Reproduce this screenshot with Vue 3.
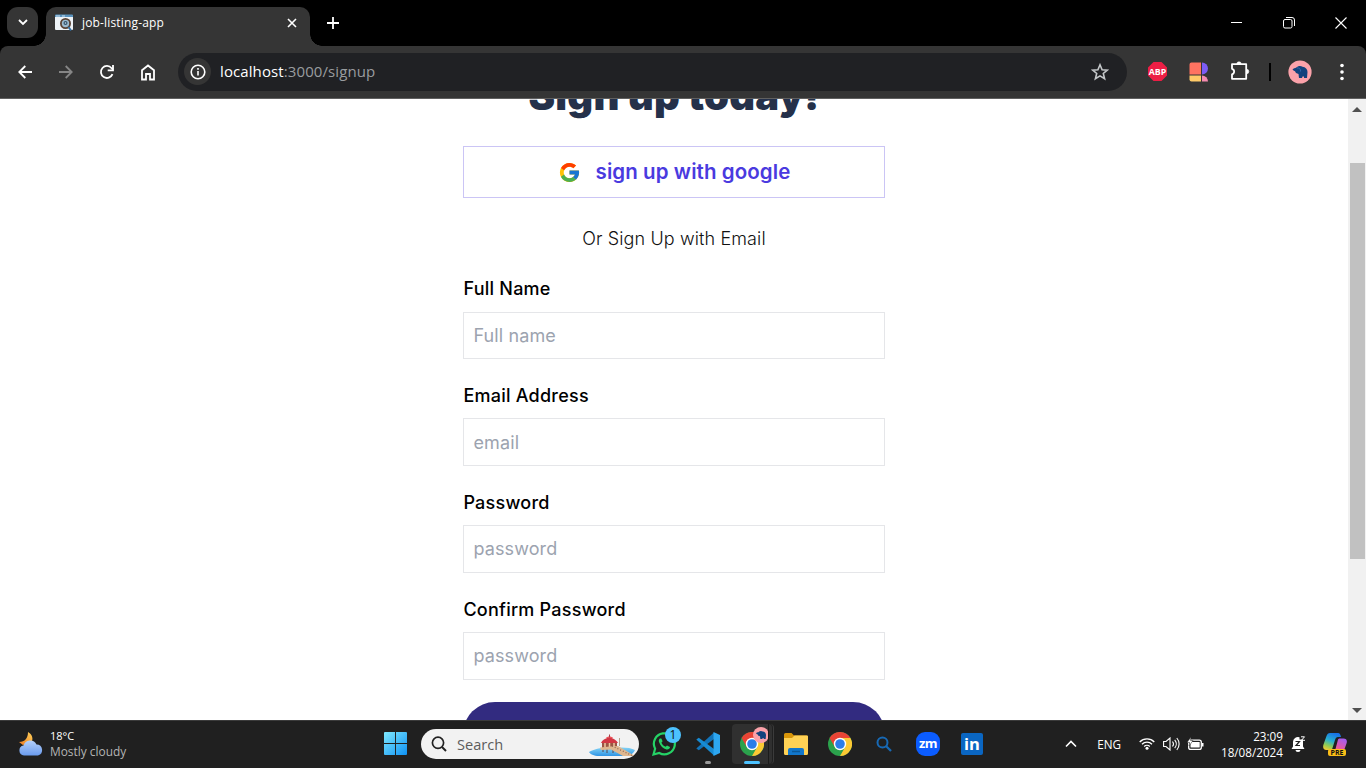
<script setup>
const fields = [
  { label: 'Full Name', placeholder: 'Full name', cls: 'f1' },
  { label: 'Email Address', placeholder: 'email', cls: 'f2' },
  { label: 'Password', placeholder: 'password', cls: 'f3' },
  { label: 'Confirm Password', placeholder: 'password', cls: 'f4' },
]
</script>

<template>
  <div class="screen">
    <header class="tabstrip">
      <div class="tabsearch">
        <svg width="10" height="7" viewBox="0 0 10 7"><path d="M1 1l4 4 4-4" fill="none" stroke="#fff" stroke-width="1.8" /></svg>
      </div>
      <div class="tab">
        <svg class="favicon" width="18" height="18" viewBox="0 0 18 18">
          <rect x="0" y="1" width="18" height="15" rx="1" fill="#eef3f7" />
          <path d="M0 3V1.500a1 1 0 0 1 1-1h16a1 1 0 0 1 1 1V3z" fill="#5b93bd" />
          <path d="M1 2h4M7 2h3" stroke="#c8def0" />
          <circle cx="10.500" cy="9.500" r="4.600" fill="#9bbbd0" stroke="#5a4335" stroke-width="1.800" />
          <circle cx="10.500" cy="9" r="2" fill="#34536a" />
          <circle cx="10.500" cy="9" r="0.800" fill="#c8def0" />
          <path d="M13.500 13l2.500 3.500" stroke="#326ea0" stroke-width="2" />
        </svg>
        <span class="tabtitle">job-listing-app</span>
        <svg class="tabclose" width="10" height="10" viewBox="0 0 10 10"><path d="M1 1l8 8M9 1l-8 8" stroke="#fff" stroke-width="1.600" /></svg>
      </div>
      <svg class="newtab" width="12" height="12" viewBox="0 0 12 12"><path d="M6 0v12M0 6h12" stroke="#fff" stroke-width="1.800" /></svg>
      <div class="winctl">
        <svg width="11" height="12" viewBox="0 0 11 12"><path d="M0 5.500h11" stroke="#fff" /></svg>
        <svg width="12" height="12" viewBox="0 0 12 12"><rect x="0.500" y="2.500" width="8.500" height="8.500" rx="1.500" fill="none" stroke="#fff" /><path d="M3 .5h6a2.500 2.500 0 0 1 2.500 2.500v6" fill="none" stroke="#fff" /></svg>
        <svg width="12" height="12" viewBox="0 0 12 12"><path d="M.5.5l11 11M11.500.5l-11 11" stroke="#fff" stroke-width="1.100" /></svg>
      </div>
    </header>

    <nav class="toolbar">
      <svg class="back" width="14" height="14" viewBox="0 0 14 14"><path d="M14 7H1.500M7.300 1L1.300 7l6 6" fill="none" stroke="#fff" stroke-width="1.800" /></svg>
      <svg class="fwd" width="14" height="14" viewBox="0 0 14 14"><path d="M0 7h12.500M6.700 1l6 6-6 6" fill="none" stroke="#868686" stroke-width="1.800" /></svg>
      <svg class="reload" width="16" height="16" viewBox="0 0 16 16"><path d="M13.500 10.200A6 6 0 1 1 12.600 4.200L14 5.600" fill="none" stroke="#fff" stroke-width="1.800" /><path d="M14 .9v5.400H8.700" fill="none" stroke="#fff" stroke-width="1.800" /></svg>
      <svg class="home" width="14" height="17" viewBox="0 0 14 17"><path d="M1 6.300L7 1.500l6 4.800V15.500H9V10H5v5.500H1z" fill="none" stroke="#fff" stroke-width="1.800" /></svg>
      <div class="omnibox">
        <div class="info">
          <svg width="16" height="16" viewBox="0 0 16 16"><circle cx="8" cy="8" r="6.800" fill="none" stroke="#fff" stroke-width="1.600" /><path d="M8 7v4.500M8 4v1.800" stroke="#fff" stroke-width="1.600" /></svg>
        </div>
        <span class="url"><b>localhost</b>:3000/signup</span>
        <svg class="star" width="18" height="18" viewBox="0 0 18 18"><path d="M9 1.800l2.100 4.900 5.200.4-4 3.400 1.300 5.200L9 12.900l-4.600 2.800 1.300-5.200-4-3.400 5.200-.4z" fill="none" stroke="#c4c7c9" stroke-width="1.600" /></svg>
      </div>
      <div class="abp"><span>ABP</span></div>
      <svg class="blocks" width="20" height="20" viewBox="0 0 20 20"><path d="M2.500.5H12v12H.5v-10a2 2 0 0 1 2-2z" fill="#ff7361" /><path d="M13 .5a6 6 0 0 1 0 12z" fill="#7c5cf5" /><path d="M.5 13.500H12v6H2.500a2 2 0 0 1-2-2z" fill="#ffca68" /><path d="M13 13.500a6 6 0 0 1 6 6h-6z" fill="#f58ab0" /></svg>
      <svg class="puzzle" width="20" height="20" viewBox="0 0 20 20"><path d="M2 3.200h14.200v14.600H2v-4.400a2.900 2.900 0 0 0 0-5.600z" fill="none" stroke="#fff" stroke-width="1.800" stroke-linejoin="round" /><path d="M6.800 3a2.200 2.200 0 0 1 4.400 0zM16.500 8.200a2.200 2.200 0 0 1 0 4.600z" fill="#fff" stroke="#fff" stroke-width="0.600" /></svg>
      <div class="vbar"></div>
      <svg class="avatar" width="24" height="24" viewBox="0 0 24 24"><circle cx="12" cy="12" r="11.600" fill="#fba2aa" /><path d="M4.500 9.500c1-1.500 2.500-1.500 3.500-1.800 2-2.200 5-2.200 6.500-1 3 .3 5 2.300 5 5.300l-.5 6h-3v-1.500h-1.500l-.5 1.500h-3l-.5-4-2.500-1-1-1.800-1.500-.7z" fill="#12427d" /><path d="M9 8c2-.5 4 1 3.500 3.500" fill="none" stroke="#2f67a8" /></svg>
      <svg class="dots" width="4" height="18" viewBox="0 0 4 18"><circle cx="2" cy="2.500" r="1.800" fill="#fff" /><circle cx="2" cy="9" r="1.800" fill="#fff" /><circle cx="2" cy="15.500" r="1.800" fill="#fff" /></svg>
    </nav>

    <main class="page">
      <div class="form">
        <h1><span>Sign up today!</span></h1>
        <button class="google">
          <svg width="23" height="23" viewBox="0 0 48 48">
            <path fill="#FFC107" d="M43.611 20.083H42V20H24v8h11.303c-1.649 4.657-6.080 8-11.303 8-6.627 0-12-5.373-12-12s5.373-12 12-12c3.059 0 5.842 1.154 7.961 3.039l5.657-5.657C34.046 6.053 29.268 4 24 4 12.955 4 4 12.955 4 24s8.955 20 20 20 20-8.955 20-20c0-1.341-.138-2.650-.389-3.917z" />
            <path fill="#FF3D00" d="M6.306 14.691l6.571 4.819C14.655 15.108 18.961 12 24 12c3.059 0 5.842 1.154 7.961 3.039l5.657-5.657C34.046 6.053 29.268 4 24 4 16.318 4 9.656 8.337 6.306 14.691z" />
            <path fill="#4CAF50" d="M24 44c5.166 0 9.860-1.977 13.409-5.192l-6.190-5.238A11.910 11.910 0 0 1 24 36c-5.202 0-9.619-3.317-11.283-7.946l-6.522 5.025C9.505 39.556 16.227 44 24 44z" />
            <path fill="#1976D2" d="M43.611 20.083H42V20H24v8h11.303a12.040 12.040 0 0 1-4.087 5.571l6.193 5.237C36.971 39.205 44 34 44 24c0-1.341-.138-2.650-.389-3.917z" />
          </svg>
          <span>sign up with google</span>
        </button>
        <p class="or"><span>Or Sign Up with Email</span></p>
        <div v-for="f in fields" :key="f.cls" class="field" :class="f.cls">
          <label><span>{{ f.label }}</span></label>
          <div class="box"><span>{{ f.placeholder }}</span></div>
        </div>
        <div class="submit"></div>
      </div>
      <div class="scroll">
        <svg width="10" height="5" viewBox="0 0 10 5"><path d="M0 5l5-5 5 5z" fill="#505050" /></svg>
        <div class="thumb"></div>
        <svg width="10" height="5" viewBox="0 0 10 5"><path d="M0 0l5 5 5-5z" fill="#505050" /></svg>
      </div>
    </main>

    <footer class="taskbar">
      <svg class="weather" width="26" height="26" viewBox="0 0 26 26">
        <defs>
          <linearGradient id="moon" x1="0" y1="1" x2="1" y2="0"><stop offset="0" stop-color="#ee7a20" /><stop offset="1" stop-color="#ffd35c" /></linearGradient>
          <linearGradient id="cloud" x1="0" y1="0" x2="0" y2="1"><stop offset="0" stop-color="#b4d0fb" /><stop offset="1" stop-color="#6a9bed" /></linearGradient>
        </defs>
        <path d="M10 1c4 2 6 7 3 11l-8 2-4-3c6 0 9-4 9-10z" fill="url(#moon)" />
        <path d="M6 24.500a5 5 0 0 1-.5-9.900A7 7 0 0 1 18.500 13.500a5.600 5.600 0 0 1 1.500 11z" fill="url(#cloud)" />
      </svg>
      <div class="wtext"><span class="temp">18°C</span><span class="cond">Mostly cloudy</span></div>
      <svg class="start" width="23" height="23" viewBox="0 0 24 24">
        <defs><linearGradient id="win" x1="0" y1="0" x2="1" y2="1"><stop offset="0" stop-color="#7fe9ff" /><stop offset="1" stop-color="#0e91f4" /></linearGradient></defs>
        <path d="M1 0h10.500v11.500H0V1a1 1 0 0 1 1-1zM12.500 0H23a1 1 0 0 1 1 1v10.500H12.500zM0 12.500h11.500V24H1a1 1 0 0 1-1-1zM12.500 12.500H24V23a1 1 0 0 1-1 1H12.500z" fill="url(#win)" />
      </svg>
      <div class="search">
        <svg class="mag" width="16" height="16" viewBox="0 0 16 16"><circle cx="7" cy="6.800" r="5.600" fill="none" stroke="#222" stroke-width="1.700" /><path d="M11 11l4 4" stroke="#222" stroke-width="2" /></svg>
        <span>Search</span>
        <svg class="pier" width="48" height="24" viewBox="0 0 48 24">
          <defs><linearGradient id="sea" x1="0" y1="0" x2="0" y2="1"><stop offset="0" stop-color="#84d4f5" /><stop offset="1" stop-color="#2f94e5" /></linearGradient></defs>
          <path d="M1 19c6-4 16-5 24-4 8-1 17-1 22 2-1 3-4 5-8 6H11c-5 0-9-2-10-4z" fill="url(#sea)" />
          <path d="M14 10h15v5H14z" fill="#9b5543" /><path d="M17 10v4M21.500 10v4M26 10v4" stroke="#f1c9a0" stroke-width="1.500" />
          <path d="M15 15v4M19 15v5M25 15v5" stroke="#5a5869" stroke-width="1.200" />
          <path d="M12 14.500l10-1 8-.5 17 10H35l-12-6.500-10 .5z" fill="#dfb78f" />
          <path d="M13 10c1-3 4-4.500 8.500-5.500 4 1 7 2.500 8.500 5.500z" fill="#d23743" /><path d="M18 5c1-2 6-2 7 0z" fill="#ef555c" /><path d="M21.500 1.500v3" stroke="#a63b46" />
          <path d="M24 13l20 9.500" stroke="#8b6754" stroke-width="1.200" stroke-dasharray="1 2" /><path d="M31.500 5v8" stroke="#b5a08a" />
        </svg>
      </div>
      <div class="app wa">
        <svg width="26" height="26" viewBox="0 0 26 26"><path d="M2.500 23.500l1.600-5.800A10.500 10.500 0 1 1 8.300 22z" fill="none" stroke="#25d366" stroke-width="2.200" /><path d="M9 7.500c-1 .5-1.500 2-1 3.500 1.500 4 4 6.500 7.500 7.500 2 .3 3.500-1 3.500-2.500l-3-1.600-1.400 1.400c-2-.8-3.300-2.200-4.200-4l1.200-1.500-1.300-2.800z" fill="#25d366" /></svg>
        <span class="badge">1</span>
      </div>
      <div class="app vs">
        <svg width="24" height="24" viewBox="0 0 24 24"><path d="M18 0.500V7L2.800 18.200 0.300 16.500z" fill="#1273b8" /><path d="M0.300 7.500L2.800 5.800 18 17v6.500z" fill="#178bd3" /><path d="M17.500 0l6.500 3v18l-6.500 3z" fill="#2da7f1" /></svg>
        <i class="dash"></i>
      </div>
      <div class="app active">
        <svg width="24" height="24" viewBox="0 0 24 24"><circle cx="12" cy="12" r="12" fill="#2ba24c" /><path d="M12 12L6.800 15L1.600 6A12 12 0 0 1 22.400 6H12z" fill="#e94335" /><path d="M12 6h10.400A12 12 0 0 1 12 24l5.200-9z" fill="#fcc934" /><circle cx="12" cy="12" r="6.200" fill="#fff" /><circle cx="12" cy="12" r="4.800" fill="#2b7de9" /></svg>
        <svg class="mini" width="16" height="16" viewBox="0 0 24 24"><circle cx="12" cy="12" r="12" fill="#fba2aa" /><path d="M4.500 9.500c1-1.500 2.500-1.500 3.500-1.800 2-2.200 5-2.200 6.500-1 3 .3 5 2.300 5 5.300l-.5 6h-3v-1.500h-1.500l-.5 1.500h-3l-.5-4-2.500-1-1-1.800-1.500-.7z" fill="#12427d" /></svg>
        <i class="dash on"></i>
      </div>
      <div class="app">
        <svg width="24" height="22" viewBox="0 0 24 22"><path d="M0 1.500A1.500 1.500 0 0 1 1.500 0h6L10 2.500h12.500A1.500 1.500 0 0 1 24 4v8H0z" fill="#d99609" /><path d="M0 5h8l2.500-2.500H23a1 1 0 0 1 1 1V20.500A1.500 1.500 0 0 1 22.500 22h-21A1.500 1.500 0 0 1 0 20.500z" fill="#ffd255" /><path d="M4 22v-5a2 2 0 0 1 2-2h12a2 2 0 0 1 2 2v5z" fill="#1277cc" /><path d="M8 18.500h8" stroke="#0b5898" stroke-width="1.500" /></svg>
      </div>
      <div class="app">
        <svg width="24" height="24" viewBox="0 0 24 24"><circle cx="12" cy="12" r="12" fill="#2ba24c" /><path d="M12 12L6.800 15L1.600 6A12 12 0 0 1 22.400 6H12z" fill="#e94335" /><path d="M12 6h10.400A12 12 0 0 1 12 24l5.200-9z" fill="#fcc934" /><circle cx="12" cy="12" r="6.200" fill="#fff" /><circle cx="12" cy="12" r="4.800" fill="#2b7de9" /></svg>
      </div>
      <div class="app"><svg width="16" height="16" viewBox="0 0 16 16"><circle cx="6.500" cy="6.500" r="5" fill="none" stroke="#1769b5" stroke-width="2" /><path d="M10 10l5 5" stroke="#1769b5" stroke-width="2.300" /></svg></div>
      <div class="app"><div class="zoomicon">zm</div></div>
      <div class="app"><div class="li">in</div></div>

      <div class="tray">
        <svg class="chev" width="12" height="8" viewBox="0 0 12 8"><path d="M1 6.500l5-5 5 5" fill="none" stroke="#fff" stroke-width="1.600" /></svg>
        <span class="eng">ENG</span>
        <svg class="wifi" width="16" height="13" viewBox="0 0 16 13"><path d="M.7 5a10.300 10.300 0 0 1 14.600 0M3 7.300a7 7 0 0 1 10 0M5.200 9.500a4 4 0 0 1 5.600 0" fill="none" stroke="#fff" stroke-width="1.300" /><circle cx="8" cy="11.300" r="1.500" fill="#fff" /></svg>
        <svg class="vol" width="17" height="14" viewBox="0 0 17 14"><path d="M.6 4.500H3L7 1v12L3 9.500H.6z" fill="none" stroke="#fff" stroke-width="1.100" /><path d="M9.500 4.500a4 4 0 0 1 0 5M11.700 2.800a6.500 6.500 0 0 1 0 8.400M13.800 1a9 9 0 0 1 0 12" fill="none" stroke="#fff" stroke-width="1.100" /></svg>
        <svg class="bat" width="17" height="14" viewBox="0 0 17 14"><rect x="1.700" y="3.200" width="12.600" height="9.200" rx="2" fill="none" stroke="#fff" stroke-width="1.300" /><rect x="3.500" y="5" width="9.200" height="5.600" rx="0.500" fill="#fff" /><path d="M15 6v3.500h1.500V6z" fill="#fff" /><path d="M4 0L0 5.500h2.600L2 9l4-5.500H3.500z" fill="#fff" stroke="#202020" stroke-width=".5" /></svg>
        <div class="clock"><span class="time">23:09</span><span class="date">18/08/2024</span></div>
        <svg class="bell" width="15" height="16" viewBox="0 0 15 16"><path d="M0.500 13L2 10.500V6a5 5 0 0 1 6.500-4.800v2.300h3.500v7l1.500 2.500z" fill="#fff" /><path d="M4.500 14h5a2.500 2 0 0 1-5 0z" fill="#fff" /><path d="M4.500 5.500h4L5 9.500h4" fill="none" stroke="#202020" stroke-width="1.200" /><path d="M10 .8h3.500L10.500 4.300H14" fill="none" stroke="#fff" /></svg>
        <div class="copilot">
          <svg width="24" height="22" viewBox="0 0 24 22">
            <defs>
              <linearGradient id="cpa" x1=".6" y1="0" x2="0.200" y2="1"><stop offset="0" stop-color="#1872e8" /><stop offset=".45" stop-color="#28b0cf" /><stop offset=".75" stop-color="#8fcb55" /><stop offset="1" stop-color="#f1cb32" /></linearGradient>
              <linearGradient id="cpb" x1=".7" y1="0" x2=".3" y2="1"><stop offset="0" stop-color="#a35df1" /><stop offset=".6" stop-color="#e658a2" /><stop offset="1" stop-color="#fa8a52" /></linearGradient>
            </defs>
            <path d="M7 0h8c2 0 2.500 2 3 4h-3c-1.500 0-2.500 1-3 3L9.500 15c-.5 1.500-1 2-2.500 2H3.500C0 17-.3 14 .5 11.500L3.500 3C4.200 1 5.300 0 7 0z" fill="url(#cpa)" />
            <path d="M16.500 5.500h4c3 0 4 2 3 5l-2.500 7c-1 3-2 4-4 4h-6l3.500-13c.4-2 .8-3 2-3z" fill="url(#cpb)" />
          </svg>
          <span class="pre">PRE</span>
        </div>
      </div>
    </footer>
  </div>
</template>

<style>
html, body { margin: 0; overflow: hidden; background: #fff; }
</style>

<style scoped>
* { box-sizing: border-box; }
svg { display: block; flex: none; }
span { white-space: nowrap; }
.screen { width: 1366px; height: 768px; display: flex; flex-direction: column; overflow: hidden; font-family: "Open Sans", "Noto Sans", sans-serif; background: #000; }
.tabstrip { height: 46px; flex: none; display: flex; align-items: flex-start; background: #000; padding-left: 7px; }
.tabsearch { width: 31px; height: 31px; margin-top: 7px; border-radius: 11px; background: #353535; display: flex; align-items: center; justify-content: center; }
.tab { position: relative; width: 264px; height: 39px; margin: 7px 0 0 8px; background: #353535; border-radius: 10px 10px 0 0; display: flex; align-items: center; padding: 0 13px 7px 9px; }
.tab::before, .tab::after { content: ""; position: absolute; bottom: 0; width: 12px; height: 12px; }
.tab::before { left: -12px; background: radial-gradient(circle at 0 0, transparent 11.500px, #353535 12px); }
.tab::after { right: -12px; background: radial-gradient(circle at 100% 0, transparent 11.500px, #353535 12px); }
.tabtitle { font-size: 12px; line-height: 16px; color: #fff; margin-left: 9px; padding-bottom: 1px; letter-spacing: 0.160px; }
.tabclose { margin-left: auto; }
.newtab { margin: 17px 0 0 17px; }
.winctl { margin: 17px 19px 0 auto; display: flex; gap: 40.500px; }
.toolbar { height: 53px; flex: none; background: #353535; border-radius: 8px 8px 0 0; border-bottom: 1px solid #606060; display: flex; align-items: center; padding-left: 18px; }
.fwd { margin-left: 27px; }
.reload { margin-left: 26px; }
.home { margin-left: 26px; }
.omnibox { width: 949px; height: 38px; margin-left: 23px; border-radius: 19px; background: #202124; display: flex; align-items: center; padding: 0 18px 0 6px; margin-top: -1px; }
.info { width: 27px; height: 27px; border-radius: 50%; background: #353535; display: flex; align-items: center; justify-content: center; }
.url { margin-left: 9px; font-size: 15px; color: #999c9f; letter-spacing: 0.100px; padding-bottom: 1px; }
.url b { font-weight: 400; color: #fff; }
.star { margin-left: auto; }
.abp { width: 19px; height: 19px; margin: -1px 0 0 21px; background: #ed1e45; clip-path: polygon(29% 0, 71% 0, 100% 29%, 100% 71%, 71% 100%, 29% 100%, 0 71%, 0 29%); display: flex; align-items: center; justify-content: center; }
.abp span { font: 700 8.800px/10px "Open Sans", sans-serif; color: #fff; }
.blocks { margin-left: 22px; margin-top: -1px; }
.puzzle { margin-left: 21px; margin-top: -3px; }
.vbar { width: 2px; height: 18px; background: #000; margin-left: 19px; }
.avatar { margin-left: 17px; margin-top: -1px; }
.dots { margin-left: 28px; margin-top: -1px; }

.page { height: 621px; flex: none; background: #fff; display: flex; justify-content: center; overflow: hidden; font-family: Inter, sans-serif; }
.form { width: 422px; margin-left: auto; margin-right: auto; display: flex; flex-direction: column; }
h1 { margin: -29px 0 0; height: 47px; font-size: 40px; font-weight: 900; line-height: 52px; letter-spacing: 0.200px; color: #25314a; display: flex; justify-content: center; }
.google { height: 52px; margin: 29px 0 0; padding: 0; border: 1px solid #cbc5f5; background: #fff; display: flex; align-items: center; justify-content: center; gap: 15px; font: 600 20.500px/28px Inter, sans-serif; letter-spacing: 0.080px; color: #4a3adf; flex: none; }
.or { margin: 27px 0 0; height: 28px; line-height: 28px; font-size: 18px; font-weight: 300; letter-spacing: 0.120px; color: #111; display: flex; justify-content: center; }
.field { flex: none; height: 107px; }
.f1 { margin-top: 21px; }
.field label { display: block; height: 37px; line-height: 30px; font-size: 18px; font-weight: 500; letter-spacing: 0.240px; color: #000; padding-left: 0.400px; }
.box { height: 48px; border: 1px solid #e5e6e9; display: flex; align-items: center; padding: 0 0 1px 9.500px; font-size: 18px; letter-spacing: 0.100px; color: #9ca3af; }
.f1 label { height: 38px; }
.f1 .box { height: 47px; padding-bottom: 0; }
.f2 .box { padding-bottom: 0; }
.submit { flex: none; height: 64px; border-radius: 32px; background: #322b80; }
.scroll { width: 18px; background: #f1f1f1; display: flex; flex-direction: column; align-items: center; padding: 8px 0 7px; }
.thumb { width: 15px; height: 396px; margin: 51px 0 auto 1px; background: #c1c1c1; }

.taskbar { height: 48px; flex: none; background: #202020; border-top: 1px solid #3b3b3b; display: flex; align-items: center; padding: 0 0 2px 18px; color: #fff; }
.wtext { width: 90px; margin-left: 6px; display: flex; flex-direction: column; font-size: 11.900px; line-height: 16px; }
.temp { font-size: 11px; }
.cond { color: #b4b4b4; line-height: 15px; }
.start { margin: 0 1px 0 244px; }
.search { width: 218px; height: 30px; margin-left: 13px; border-radius: 15px; background: #f2f2f2; display: flex; align-items: center; padding: 0 3px 0 10px; overflow: hidden; flex: none; }
.search span { margin-left: 10px; font-size: 14.600px; color: #5c5c5c; }
.pier { margin: 3px 0 0 auto; }
.app { position: relative; width: 40px; height: 40px; margin-right: 4px; display: flex; align-items: center; justify-content: center; flex: none; }
.wa { margin-left: 5px; }
.badge { position: absolute; left: 21px; top: 3px; width: 16px; height: 16px; border-radius: 50%; background: #4cc2ff; color: #111; font-size: 12px; line-height: 16px; text-align: center; }
.active { background: #303030; border-radius: 4px; }
.active::after { content: ""; position: absolute; left: 36px; top: 0; width: 4px; height: 40px; border-right: 1px solid #3b3b3b; border-left: 1px solid #1b1b1b; border-radius: 0 4px 4px 0; }
.mini { position: absolute; left: 21px; top: 3px; }
.dash { position: absolute; left: 17px; bottom: 0; width: 6px; height: 3px; border-radius: 2px; background: #9a9a9a; }
.dash.on { left: 12px; width: 16px; background: #4cc2ff; }
.zoomicon { width: 24px; height: 24px; border-radius: 9px; background: #0b5cff; font: 700 13px/22px "Open Sans", sans-serif; text-align: center; letter-spacing: -0.500px; }
.li { width: 22px; height: 22px; border-radius: 2px; background: #0a66c2; font: 700 16.500px/21px "Open Sans", sans-serif; text-align: center; }
.tray { margin-left: auto; display: flex; align-items: center; height: 46px; padding-right: 19px; font-size: 11.700px; }
.eng { margin-left: 20px; }
.wifi { margin-left: 18px; }
.vol { margin-left: 8px; }
.bat { margin-left: 7px; }
.clock { width: 79px; display: flex; flex-direction: column; align-items: flex-end; line-height: 16px; }
.bell { margin-left: 8px; }
.copilot { position: relative; margin-left: 17px; width: 24px; height: 22px; }
.pre { position: absolute; left: 5px; top: 16px; width: 18px; height: 7px; border-radius: 2px; background: #fbbe18; color: #111; font: 700 7px/7px "Open Sans", sans-serif; text-align: center; }
</style>
